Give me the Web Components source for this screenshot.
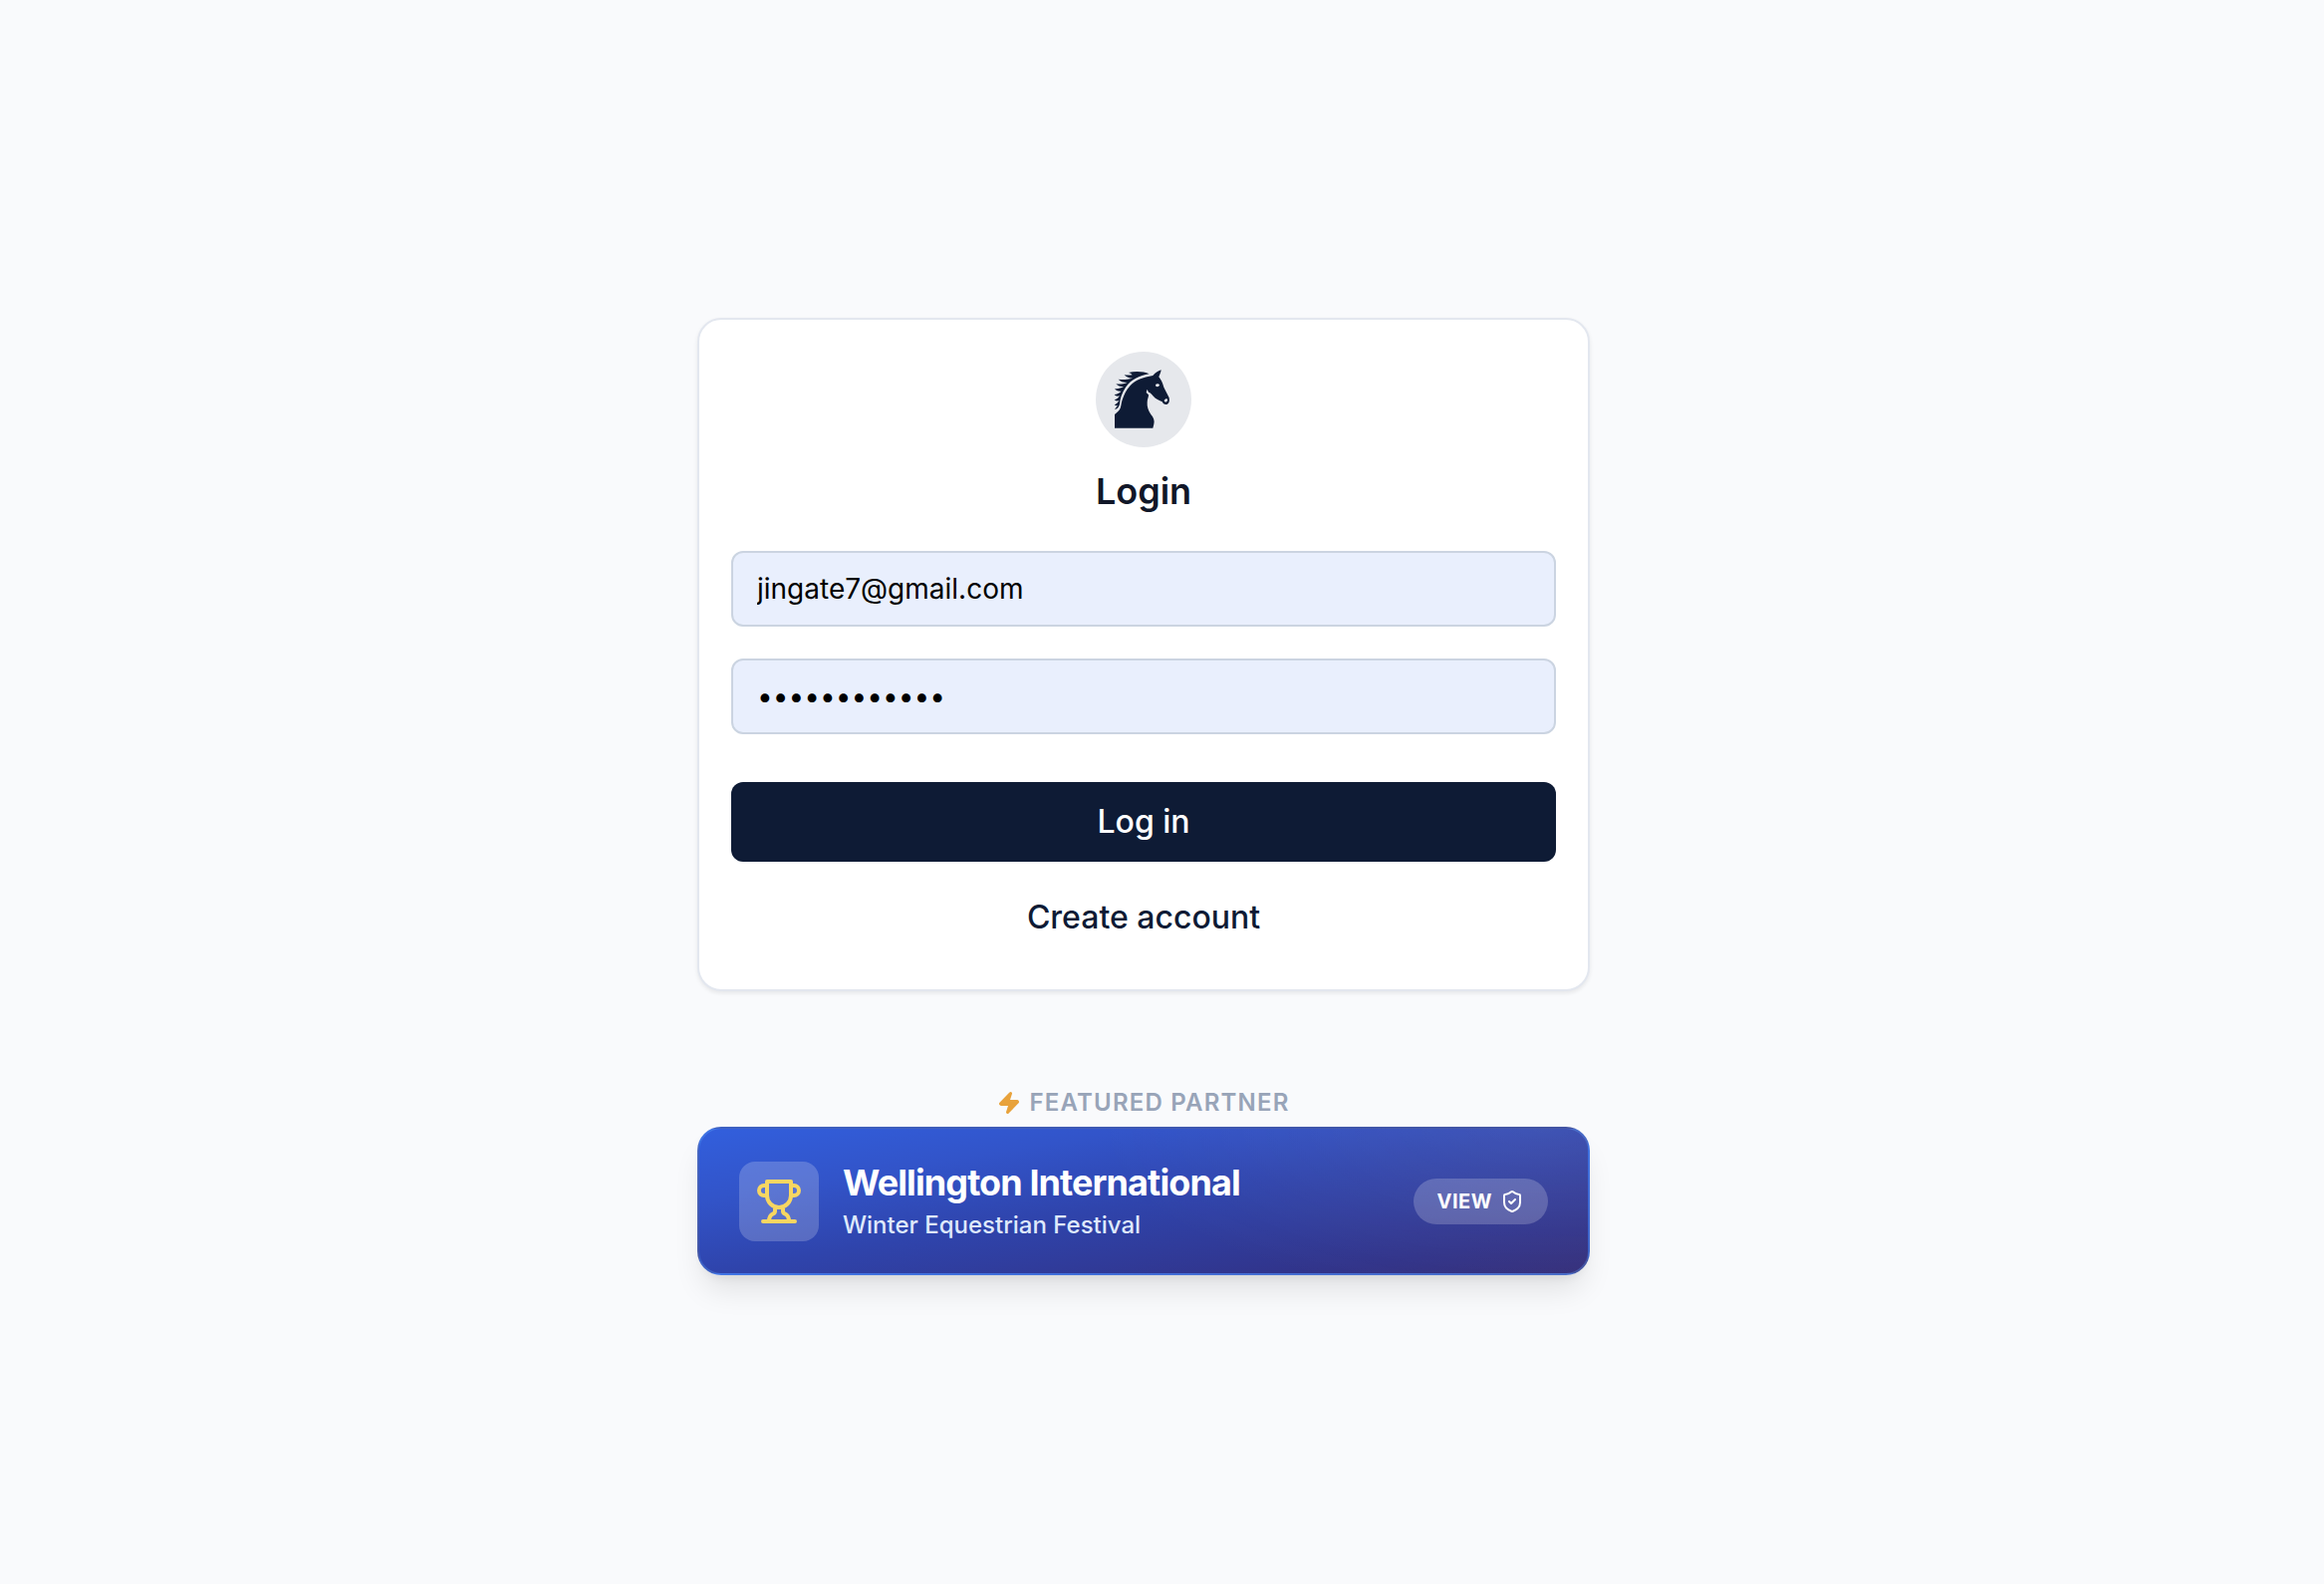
<!DOCTYPE html>
<html lang="en">
<head>
<meta charset="utf-8">
<meta name="viewport" content="width=device-width, initial-scale=1">
<title>Login</title>
<style>
  body { margin: 0; background: #f9fafc; font-family: Inter, "Liberation Sans", sans-serif; -webkit-font-smoothing: antialiased; }
</style>
</head>
<body>
<login-page>
  <login-card heading="Login">
    <text-field kind="email" label="Email" value="jingate7@gmail.com"></text-field>
    <text-field kind="password" label="Password" value="abcdefghijkl"></text-field>
    <action-button slot="actions" variant="primary">Log in</action-button>
    <action-button slot="actions" variant="ghost">Create account</action-button>
  </login-card>
  <partner-section>
    <span slot="label">FEATURED PARTNER</span>
    <partner-banner>
      <span slot="name">Wellington International</span>
      <span slot="event">Winter Equestrian Festival</span>
      <span slot="action">VIEW</span>
    </partner-banner>
  </partner-section>
</login-page>

<script>
class BaseElement extends HTMLElement {
  constructor() {
    super();
    this.attachShadow({ mode: "open" });
  }
  connectedCallback() {
    this.shadowRoot.innerHTML = "<style>*{box-sizing:border-box}</style>" + this.render();
  }
}

customElements.define("login-page", class extends BaseElement {
  render() {
    return `
      <style>
        :host { display: flex; justify-content: center; align-items: center; min-height: 100vh; padding: 9px 37px 0 0; box-sizing: border-box; }
        main { display: flex; flex-direction: column; gap: 96px; width: 100%; max-width: 896px; }
      </style>
      <main><slot></slot></main>`;
  }
});

customElements.define("horse-avatar", class extends BaseElement {
  render() {
    return `
      <style>
        :host { display: block; width: 96px; height: 96px; border-radius: 50%; background: #e6e8ec; }
        svg { display: block; width: 100%; height: 100%; }
      </style>
      <svg viewBox="60 54 288 288" aria-hidden="true">
        <g fill="#0e1b35">
          <path d="M117 284V243C124 236 131 232 134 224C137 215 137 207 140 199C145 183 152 168 164 156C180 139 202 131 232 126C239 118 247 113 257 109C256 117 252 124 250 130C257 138 261 148 265 161L281 193C283 203 281 210 274 213C267 214 262 210 260 205C252 201 240 197 232 187C229 182 225 178 219 176L215 167L212 177L219 184C220 190 215 196 215 207C214 219 218 231 226 243C234 252 238 262 235 272L232 284Z"/>
          <path d="M221 121C205 113 178 112 159 117C165 119 168 121 170 124C162 125 154 125 146 124C152 131 161 134 171 134C158 137 141 139 128 137C133 143 142 147 155 147C144 151 132 153 121 151C126 157 134 160 144 160C135 164 126 167 117 165C121 171 127 174 137 173C131 178 124 182 116 183C120 188 125 189 132 187C128 193 122 198 116 199C120 203 124 203 130 201C127 207 121 212 116 214C119 217 122 217 126 215L117 228C124 227 130 221 132 212C133 195 139 178 150 161C166 138 191 127 221 121Z"/>
        </g>
        <path d="M240 153C244 149 250 150 252 154C252 159 245 161 241 158Z" fill="#e6e8ec"/>
        <path d="M266 201C270 194 276 195 276 200C275 206 268 208 266 201Z" fill="#e6e8ec"/>
      </svg>`;
  }
});

customElements.define("login-card", class extends BaseElement {
  render() {
    return `
      <style>
        :host { display: block; }
        form { display: flex; flex-direction: column; align-items: center; padding: 32px; background: #fff; border: 2px solid #e3e7ef; border-radius: 24px; box-shadow: 0 2px 4px rgba(0,0,0,.08); }
        h1 { margin: 24px 0 40px; font-size: 36px; line-height: 40px; font-weight: 600; color: #111728; }
        .fields, .actions { display: flex; flex-direction: column; width: 100%; }
        .fields { gap: 32px; }
        .actions { gap: 16px; margin-top: 48px; }
      </style>
      <form>
        <horse-avatar></horse-avatar>
        <h1>${this.getAttribute("heading")}</h1>
        <div class="fields"><slot></slot></div>
        <div class="actions"><slot name="actions"></slot></div>
      </form>`;
  }
});

customElements.define("text-field", class extends BaseElement {
  render() {
    const label = this.getAttribute("label");
    return `
      <style>
        :host { display: block; }
        label { display: block; }
        input { display: block; width: 100%; height: 76px; padding: 0 24px; border: 2px solid #cbd4e1; border-radius: 12px; background: #e9effd; color: #000; font: 400 28px/40px Inter, "Liberation Sans", sans-serif; outline: none; }
      </style>
      <label><input type="${this.getAttribute("kind")}" aria-label="${label}" value="${this.getAttribute("value")}"></label>`;
  }
});

customElements.define("action-button", class extends BaseElement {
  render() {
    return `
      <style>
        :host { display: block; }
        button { display: block; width: 100%; height: 80px; padding: 0 32px; border: 0; border-radius: 12px; background: transparent; color: #0e1b35; font: 500 32px/48px Inter, "Liberation Sans", sans-serif; cursor: pointer; }
        :host([variant="primary"]) button { background: #0e1b35; color: #fff; }
      </style>
      <button type="button"><slot></slot></button>`;
  }
});

customElements.define("partner-section", class extends BaseElement {
  render() {
    return `
      <style>
        :host { display: flex; flex-direction: column; gap: 8px; }
        .label { display: flex; justify-content: center; align-items: center; gap: 8px; font-size: 24px; line-height: 32px; font-weight: 600; letter-spacing: .05em; color: #98a4b8; }
        svg { width: 24px; height: 24px; }
      </style>
      <div class="label">
        <svg viewBox="0 0 24 24" fill="#e8a23b" stroke="#e8a23b" stroke-width="2" stroke-linecap="round" stroke-linejoin="round" aria-hidden="true"><path d="M4 14a1 1 0 0 1-.78-1.63l9.9-10.2a.5.5 0 0 1 .86.46l-1.92 6.02A1 1 0 0 0 13 10h7a1 1 0 0 1 .78 1.63l-9.9 10.2a.5.5 0 0 1-.86-.46l1.92-6.02A1 1 0 0 0 11 14z"/></svg>
        <slot name="label"></slot>
      </div>
      <slot></slot>`;
  }
});

customElements.define("partner-banner", class extends BaseElement {
  render() {
    return `
      <style>
        :host { display: block; }
        a { display: flex; align-items: center; gap: 24px; padding: 32px 40px; border: 2px solid rgba(96,165,250,.3); border-radius: 24px; color: #fff; text-decoration: none;
          background: radial-gradient(ellipse 50% 120% at 95% 0, rgba(255,255,255,.08), transparent), linear-gradient(to bottom right, #325fdd, #3254c9 25%, #2f44ac 50%, #313389 85%, #352f7a);
          box-shadow: 0 20px 30px -6px rgba(0,0,0,.1), 0 8px 12px -8px rgba(0,0,0,.1); }
        .icon { display: flex; justify-content: center; align-items: center; flex: none; width: 80px; height: 80px; border-radius: 16px; background: rgba(255,255,255,.2); }
        .icon svg { width: 48px; height: 48px; }
        .text { display: flex; flex-direction: column; gap: 4px; flex: 1; min-width: 0; }
        .name { font-size: 36px; line-height: 45px; font-weight: 700; letter-spacing: -.025em; }
        .event { font-size: 24px; line-height: 32px; font-weight: 500; color: #dee9fc; }
        .pill { display: flex; align-items: center; gap: 8px; padding: 8px 24px; border-radius: 23px; background: rgba(255,255,255,.2); font-size: 20px; line-height: 30px; font-weight: 700; letter-spacing: .025em; }
        .pill svg { width: 24px; height: 24px; }
      </style>
      <a href="#partner">
        <span class="icon">
          <svg viewBox="0 0 24 24" fill="none" stroke="#f7d661" stroke-width="2" stroke-linecap="round" stroke-linejoin="round" aria-hidden="true"><path d="M6 9H4.500a2.500 2.500 0 0 1 0-5H6M18 9h1.500a2.500 2.500 0 0 0 0-5H18M4 22h16M10 14.660V17c0 .55-.47.98-.97 1.210C7.850 18.750 7 20.240 7 22M14 14.660V17c0 .55.47.98.97 1.210C16.150 18.750 17 20.240 17 22M18 2H6v7a6 6 0 0 0 12 0V2Z"/></svg>
        </span>
        <div class="text">
          <div class="name"><slot name="name"></slot></div>
          <div class="event"><slot name="event"></slot></div>
        </div>
        <span class="pill"><slot name="action"></slot>
          <svg viewBox="0 0 24 24" fill="none" stroke="#fff" stroke-width="2" stroke-linecap="round" stroke-linejoin="round" aria-hidden="true"><path d="M20 13c0 5-3.500 7.500-7.660 8.950a1 1 0 0 1-.67-.01C7.500 20.500 4 18 4 13V6a1 1 0 0 1 1-1c2 0 4.500-1.200 6.240-2.720a1.170 1.170 0 0 1 1.520 0C14.510 3.810 17 5 19 5a1 1 0 0 1 1 1z"/><path d="m9 12 2 2 4-4"/></svg>
        </span>
      </a>`;
  }
});
</script>
</body>
</html>
